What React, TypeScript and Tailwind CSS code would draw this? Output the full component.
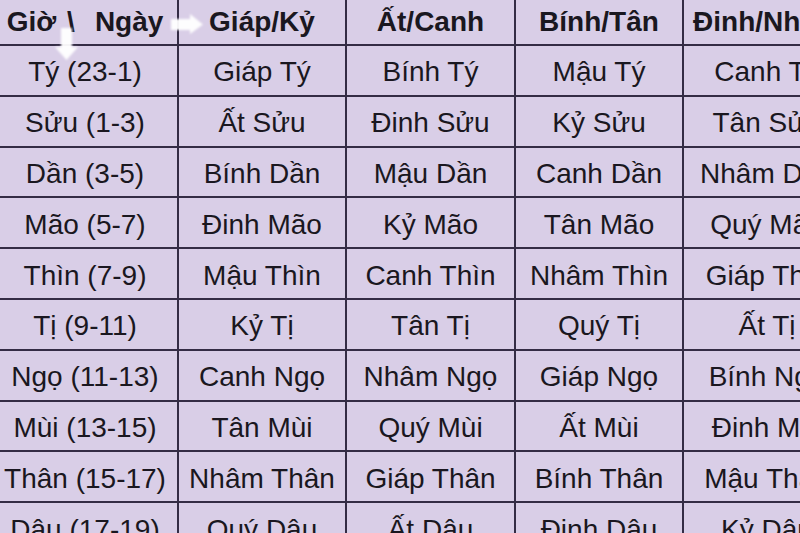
const header = ["Giáp/Kỷ", "Ất/Canh", "Bính/Tân", "Đinh/Nhâm"];

const rows: string[][] = [
  ["Tý (23-1)", "Giáp Tý", "Bính Tý", "Mậu Tý", "Canh Tý"],
  ["Sửu (1-3)", "Ất Sửu", "Đinh Sửu", "Kỷ Sửu", "Tân Sửu"],
  ["Dần (3-5)", "Bính Dần", "Mậu Dần", "Canh Dần", "Nhâm Dần"],
  ["Mão (5-7)", "Đinh Mão", "Kỷ Mão", "Tân Mão", "Quý Mão"],
  ["Thìn (7-9)", "Mậu Thìn", "Canh Thìn", "Nhâm Thìn", "Giáp Thìn"],
  ["Tị (9-11)", "Kỷ Tị", "Tân Tị", "Quý Tị", "Ất Tị"],
  ["Ngọ (11-13)", "Canh Ngọ", "Nhâm Ngọ", "Giáp Ngọ", "Bính Ngọ"],
  ["Mùi (13-15)", "Tân Mùi", "Quý Mùi", "Ất Mùi", "Đinh Mùi"],
  ["Thân (15-17)", "Nhâm Thân", "Giáp Thân", "Bính Thân", "Mậu Thân"],
  ["Dậu (17-19)", "Quý Dậu", "Ất Dậu", "Đinh Dậu", "Kỷ Dậu"],
];

// column widths incl. right border
const cols = ["w-[179px] pr-[7px]", "w-[168px]", "w-[169px]", "w-[168px]", "w-[168px]"];

function Arrows() {
  return (
    <svg className="absolute left-0 top-0 pointer-events-none" width="220" height="70" viewBox="0 0 220 70">
      <defs>
        <filter id="soft" x="-20%" y="-20%" width="140%" height="140%">
          <feGaussianBlur stdDeviation="0.8" />
        </filter>
      </defs>
      <g fill="#ffffff" fillOpacity="0.95" filter="url(#soft)">
        {/* right arrow */}
        <path d="M171 19 L190 19 L190 14 L203 24.5 L190 34 L190 30 L171 30 Z" />
        {/* down arrow */}
        <path d="M61 28 L72 28 L72 47 L78 47 L66.5 60 L55 47 L61 47 Z" />
      </g>
    </svg>
  );
}

export default function App() {
  return (
    <div
      className="relative w-[800px] h-[533px] overflow-hidden bg-[#d9cee7] text-[#1a1720]"
      style={{ fontFamily: '"Liberation Sans", Arial, sans-serif' }}
    >
      <div className="flex flex-col w-[852px]">
        <div className="flex h-[46px] border-b-2 border-[#342c45] text-[28px] font-bold">
          <div className={`${cols[0]} shrink-0 flex items-center justify-center border-r-2 border-[#342c45] whitespace-pre`}>
            <span>Giờ</span>
            <span className="ml-[11px]">\</span>
            <span className="ml-[20px]">Ngày</span>
          </div>
          {header.map((h, i) => (
            <div
              key={h}
              className={`${cols[i + 1]} shrink-0 flex items-center justify-center border-r-2 border-[#342c45] whitespace-nowrap`}
            >
              {h}
            </div>
          ))}
        </div>
        {rows.map((r) => (
          <div key={r[0]} className="flex h-[50.8px] border-b-2 border-[#342c45] text-[28px]">
            {r.map((c, i) => (
              <div
                key={i}
                className={`${cols[i]} shrink-0 flex items-center justify-center pt-[4px] border-r-2 border-[#342c45] whitespace-nowrap`}
              >
                {c}
              </div>
            ))}
          </div>
        ))}
      </div>
      <Arrows />
    </div>
  );
}
